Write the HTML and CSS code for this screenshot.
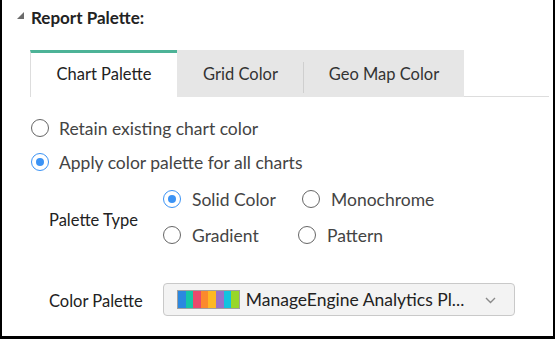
FILE: index.html
```html
<!DOCTYPE html>
<html lang="en">
  <head>
    <meta charset="UTF-8" />
    <title>Report Palette</title>
    <link rel="stylesheet" href="styles.css">
  </head>
  <body>
    <div class="frame">
      <div class="section-head">
        <svg class="toggle" width="7" height="7" viewBox="0 0 7 7"><path d="M7 0 L7 7 L0 7 Z" fill="#6b6b6b" /></svg>
        <span>Report Palette:</span>
      </div>

      <!-- tabs -->
      <div class="tabs">
        <div class="tab active">Chart Palette</div>
        <div class="tab grid-tab">Grid Color</div>
        <div class="tab geo-tab">Geo Map Color</div>
        <div class="tab-rest"></div>
      </div>

      <div class="options">
        <label class="radio"><span class="dot"></span>Retain existing chart color</label>
        <label class="radio"><span class="dot on"></span>Apply color palette for all charts</label>
      </div>

      <div class="field palette-type">
        <div class="field-label">Palette Type</div>
        <div class="type-grid">
          <label class="radio small"><span class="dot on"></span>Solid Color</label>
          <label class="radio small"><span class="dot"></span>Monochrome</label>
          <label class="radio small"><span class="dot"></span>Gradient</label>
          <label class="radio small pattern"><span class="dot"></span>Pattern</label>
        </div>
      </div>

      <div class="field color-palette">
        <div class="field-label">Color Palette</div>
        <div class="select">
          <div class="swatch">
            <i style="background:#2b88e0"></i><i style="background:#16c5a6"></i><i style="background:#e9496c"></i><i style="background:#fb8a2d"></i><i style="background:#fdb823"></i><i style="background:#9870c9"></i><i style="background:#12c2df"></i><i style="background:#98d72a"></i>
          </div>
          <span class="select-text">ManageEngine Analytics Pl...</span>
          <svg class="chevron" width="11" height="7" viewBox="0 0 11 7"><path d="M1 1 L5.5 5.5 L10 1" fill="none" stroke="#8a8a8a" stroke-width="1.4" /></svg>
        </div>
      </div>
    </div>
  </body>
</html>
```

FILE: styles.css
```css
body {
  margin: 0;
  font-family: Lato, "Open Sans", sans-serif;
  background-color: white;
}

.frame {
  width: 555px;
  height: 339px;
  box-sizing: border-box;
  border-left: 2px solid #000;
  border-right: 2px solid #000;
  border-bottom: 3px solid #000;
  overflow: hidden;
}

.section-head {
  display: flex;
  align-items: center;
  padding: 7px 0 0 15px;
  height: 21px;
  font-size: 17px;
  font-weight: bold;
  color: #222;
}

.toggle {
  margin-right: 7px;
  margin-top: -4px;
}

.tabs {
  display: flex;
  margin: 22px 4px 0 28px;
  height: 47px;
}

.tab {
  display: flex;
  align-items: center;
  justify-content: center;
  font-size: 16.5px;
  color: #333;
  background-color: #e6e6e6;
  box-sizing: border-box;
}

.tab.active {
  width: 147px;
  background-color: white;
  border-top: 3px solid #4db397;
  border-left: 1px solid #ddd;
  padding-bottom: 2px;
  color: #222;
}

.grid-tab {
  width: 127px;
  position: relative;
}

.grid-tab::after {
  content: "";
  position: absolute;
  right: 0;
  top: 12px;
  bottom: 4px;
  border-right: 1px solid #cfcfcf;
}

.geo-tab {
  width: 160px;
}

.tab-rest {
  flex: 1;
  border-bottom: 1px solid #ddd;
}

.options {
  margin: 14px 0 0 29px;
}

.radio {
  display: flex;
  align-items: center;
  height: 34px;
  font-size: 17.5px;
  color: #444;
}

.dot {
  width: 18px;
  height: 18px;
  box-sizing: border-box;
  border: 1.5px solid #666;
  border-radius: 50%;
  margin-right: 10px;
  display: flex;
  align-items: center;
  justify-content: center;
}

.dot.on {
  border-color: #3b93f5;
}

.dot.on::after {
  content: "";
  width: 8px;
  height: 8px;
  border-radius: 50%;
  background-color: #3b93f5;
}

.field {
  display: flex;
  align-items: center;
  padding-left: 47px;
}

.field-label {
  width: 114px;
  font-size: 16.5px;
  color: #222;
}

.palette-type {
  margin-top: 2px;
}

.palette-type .field-label {
  padding-top: 6px;
}

.type-grid {
  display: grid;
  grid-template-columns: 139px auto;
}

.radio.small {
  height: 36px;
}

.radio.small .dot {
  margin-right: 11px;
}

.radio.pattern {
  margin-left: -4px;
}

.color-palette {
  margin-top: 30px;
}

.color-palette .field-label {
  padding-top: 3px;
}

.select {
  width: 352px;
  height: 33px;
  box-sizing: border-box;
  display: flex;
  align-items: center;
  padding: 0 18px 0 13px;
  border: 1px solid #c9c9c9;
  border-radius: 4px;
  background-color: #f3f3f3;
}

.swatch {
  display: flex;
  height: 19px;
  border: 1px solid #a0a0a0;
  box-sizing: border-box;
}

.swatch i {
  width: 7.6px;
  height: 100%;
}

.select-text {
  flex: 1;
  margin-left: 6px;
  font-size: 17.5px;
  color: #222;
}

.chevron {
  margin-top: 1px;
}
```
